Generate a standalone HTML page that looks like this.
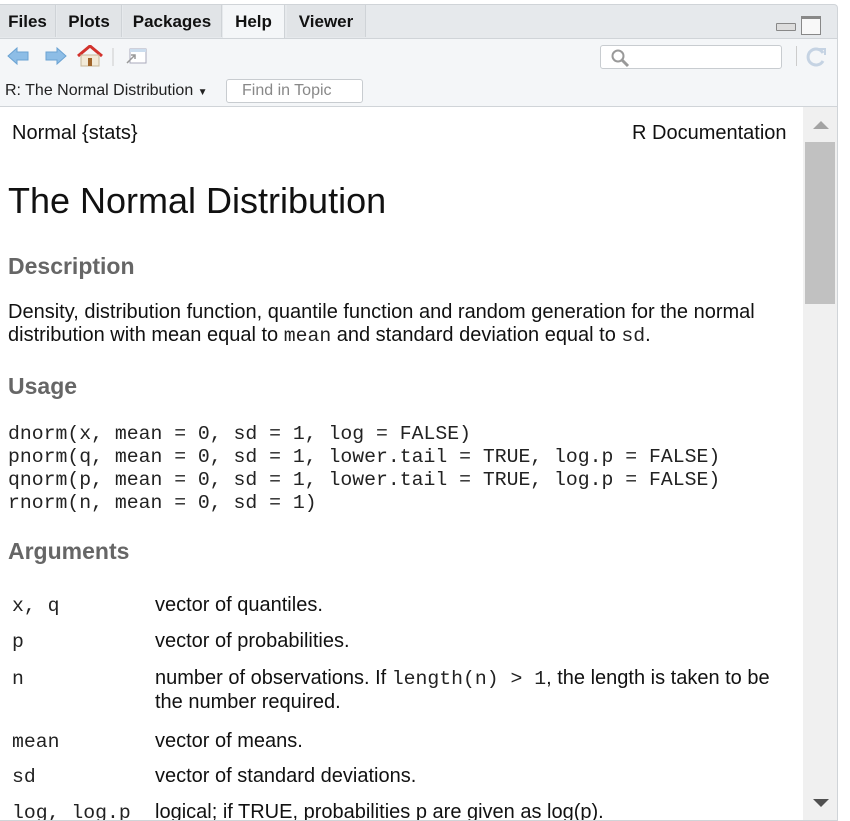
<!DOCTYPE html>
<html><head><style>
body{margin:0;width:850px;height:819px;overflow:hidden;background:#fff;font-family:"Liberation Sans",sans-serif;position:relative}
.pane{position:absolute;left:0;top:4px;width:837px;height:815px;border:1px solid #d0d4d8;border-left:none;border-radius:0 4px 0 0;background:#e6e9ec;overflow:hidden}
.tab{position:absolute;top:0;height:32px;background:#e1e4e7;border-right:1px solid #cfd3d7;font-weight:bold;font-size:17px;line-height:33px;text-align:center;color:#111}
.tab.act{background:#f4f6f8;height:34px}
.tb{position:absolute;left:0;top:33px;width:837px;height:32px;background:#f4f6f8;border-top:1px solid #d0d4d8;border-bottom:1px solid #d8dce0}
.tb2{position:absolute;left:0;top:66px;width:837px;height:35px;background:#f4f6f8;border-bottom:1px solid #d0d4d8}
.content{position:absolute;left:0;top:102px;width:803px;height:713px;background:#fff}
.sb{position:absolute;left:803px;top:102px;width:34px;height:713px;background:#f0f0f0}
.c{position:absolute;font-size:20px;color:#111;white-space:nowrap}
.h{position:absolute;font-size:23px;font-weight:bold;color:#666}
.m{font-family:"Liberation Mono",monospace;font-size:19.8px;color:#222}
</style></head><body>
<div class="pane">
<div class="tab" style="left:0;width:55px">Files</div>
<div class="tab" style="left:57px;width:64px">Plots</div>
<div class="tab" style="left:123px;width:98px">Packages</div>
<div class="tab act" style="left:223px;width:61px">Help</div>
<div class="tab" style="left:287px;width:78px">Viewer</div>
<div style="position:absolute;left:776px;top:18px;width:18px;height:6px;border:1px solid #888;background:#ddd;border-radius:1px"></div>
<div style="position:absolute;left:801px;top:11px;width:18px;height:15px;border:1px solid #888;border-top:3px solid #888;background:#f8f8f8"></div>
<div class="tb">
<svg style="position:absolute;left:6px;top:6px" width="110" height="24" viewBox="0 0 110 24">
<path d="M2 11 L11 3 L11 7 L22 7 L22 15 L11 15 L11 19 Z" fill="#8dbde6" stroke="#6aa2d2"/>
<path d="M60 11 L51 3 L51 7 L40 7 L40 15 L51 15 L51 19 Z" fill="#8dbde6" stroke="#6aa2d2"/>
<path d="M72 11 L84 1 L96 11" fill="none" stroke="#d2322d" stroke-width="3"/>
<rect x="75" y="10" width="18" height="11" fill="#f2ead8" stroke="#c8b89a"/>
<rect x="82" y="13" width="4" height="8" fill="#a0642a"/>
<line x1="107" y1="3" x2="107" y2="21" stroke="#ccc"/>
</svg>
<svg style="position:absolute;left:124px;top:8px" width="24" height="20"><rect x="6" y="2" width="16" height="14" fill="#fff" stroke="#aab"/><rect x="6" y="2" width="16" height="3" fill="#cde"/><path d="M3 16 L11 8 M7 8 L11 8 L11 12" stroke="#999" fill="none" stroke-width="1.5"/></svg>
<div style="position:absolute;left:600px;top:6px;width:180px;height:22px;border:1px solid #c8ccd0;border-radius:3px;background:#fff"></div>
<svg style="position:absolute;left:610px;top:9px" width="22" height="20"><circle cx="8" cy="8" r="5.5" fill="none" stroke="#999" stroke-width="2"/><line x1="12" y1="12" x2="18" y2="18" stroke="#999" stroke-width="3"/></svg>
<div style="position:absolute;left:796px;top:7px;width:1px;height:20px;background:#ccc"></div>
<svg style="position:absolute;left:805px;top:6px" width="24" height="24"><path d="M18 8 A8 8 0 1 0 18 16" fill="none" stroke="#c5d3e3" stroke-width="3"/><path d="M14 4 L20 4 L20 10" fill="none" stroke="#c5d3e3" stroke-width="2"/></svg>
</div>
<div class="tb2">
<div style="position:absolute;left:5px;top:11px;font-size:16px;color:#222">R: The Normal Distribution <span style="font-size:10px">&#9660;</span></div>
<div style="position:absolute;left:226px;top:8px;width:135px;height:22px;border:1px solid #c8ccd0;border-radius:3px;background:#fff;font-size:16px;color:#888;line-height:22px;text-indent:15px">Find in Topic</div>
</div>
<div class="content">
<div class="c" style="left:12px;top:15px">Normal {stats}</div>
<div class="c" style="left:632px;top:15px">R Documentation</div>
<div class="c" style="left:8px;top:73px;font-size:36px">The Normal Distribution</div>
<div class="h" style="left:8px;top:146px">Description</div>
<div class="c" style="left:8px;top:194px;line-height:23px">Density, distribution function, quantile function and random generation for the normal<br>distribution with mean equal to <span class="m">mean</span> and standard deviation equal to <span class="m">sd</span>.</div>
<div class="h" style="left:8px;top:266px">Usage</div>
<pre class="c m" style="left:8px;top:316px;margin:0;line-height:23px;white-space:pre">dnorm(x, mean = 0, sd = 1, log = FALSE)
pnorm(q, mean = 0, sd = 1, lower.tail = TRUE, log.p = FALSE)
qnorm(p, mean = 0, sd = 1, lower.tail = TRUE, log.p = FALSE)
rnorm(n, mean = 0, sd = 1)</pre>
<div class="h" style="left:8px;top:431px">Arguments</div>
<div class="c m" style="left:12px;top:488px">x, q</div><div class="c" style="left:155px;top:487px">vector of quantiles.</div>
<div class="c m" style="left:12px;top:524px">p</div><div class="c" style="left:155px;top:523px">vector of probabilities.</div>
<div class="c m" style="left:12px;top:561px">n</div><div class="c" style="left:155px;top:560px;line-height:23px">number of observations. If <span class="m">length(n) &gt; 1</span>, the length is taken to be<br>the number required.</div>
<div class="c m" style="left:12px;top:624px">mean</div><div class="c" style="left:155px;top:623px">vector of means.</div>
<div class="c m" style="left:12px;top:659px">sd</div><div class="c" style="left:155px;top:658px">vector of standard deviations.</div>
<div class="c m" style="left:12px;top:695px">log, log.p</div><div class="c" style="left:155px;top:694px">logical; if TRUE, probabilities p are given as log(p).</div>
</div>
<div class="sb">
<div style="position:absolute;left:10px;top:14px;width:0;height:0;border-left:8px solid transparent;border-right:8px solid transparent;border-bottom:8px solid #a3a3a3"></div>
<div style="position:absolute;left:2px;top:35px;width:30px;height:162px;background:#c1c1c1"></div>
<div style="position:absolute;left:10px;top:692px;width:0;height:0;border-left:8px solid transparent;border-right:8px solid transparent;border-top:8px solid #505050"></div>
</div>
</div>
</body></html>
